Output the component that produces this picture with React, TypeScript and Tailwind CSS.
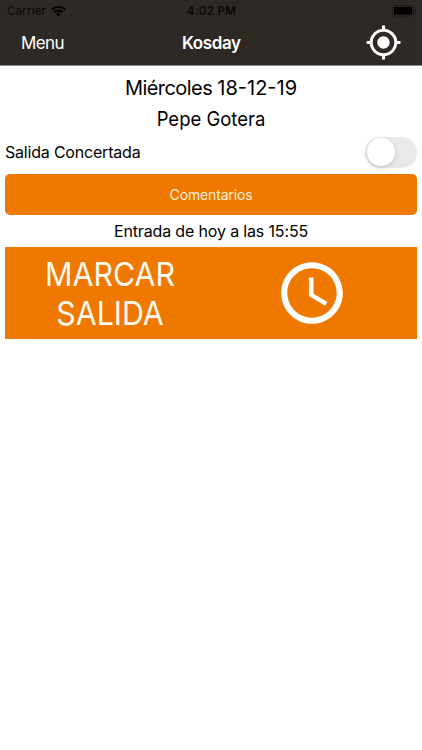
import React, { useState } from 'react';

function WifiIcon() {
  return (
    <svg viewBox="0 0 15 11" className="w-[15px] h-[11px]" fill="black">
      <path d="M7.5 0C4.6 0 2 1.1 0 2.9l1.3 1.4A9.1 9.1 0 0 1 7.5 2c2.4 0 4.5.8 6.2 2.3L15 2.9C13 1.1 10.4 0 7.5 0z" />
      <path d="M7.5 3.6c-1.9 0-3.6.7-4.9 1.9l1.4 1.5a5.2 5.2 0 0 1 7 0l1.4-1.5A7.1 7.1 0 0 0 7.5 3.6z" />
      <path d="M7.5 7.1c-.9 0-1.7.3-2.3.9l2.3 2.5L9.8 8c-.6-.6-1.4-.9-2.3-.9z" />
    </svg>
  );
}

function BatteryIcon() {
  return (
    <svg viewBox="0 0 24 12" className="w-[24px] h-[12px]">
      <rect x="0.5" y="0.5" width="21" height="10.5" rx="2.5" fill="none" stroke="black" strokeOpacity="0.4" />
      <rect x="2" y="2" width="18" height="7.5" rx="1.3" fill="black" />
      <path d="M22.7 4v3.6c.8-.3 1.3-1 1.3-1.8S23.5 4.3 22.7 4z" fill="black" fillOpacity="0.5" />
    </svg>
  );
}

function LocationIcon() {
  return (
    <svg viewBox="0 0 24 24" className="w-[37px] h-[37px]" fill="white">
      <path d="M12 8c-2.21 0-4 1.79-4 4s1.79 4 4 4 4-1.79 4-4-1.79-4-4-4zm8.94 3A8.994 8.994 0 0 0 13 3.06V1h-2v2.06A8.994 8.994 0 0 0 3.06 11H1v2h2.06A8.994 8.994 0 0 0 11 20.94V23h2v-2.06A8.994 8.994 0 0 0 20.94 13H23v-2h-2.06zM12 19c-3.87 0-7-3.13-7-7s3.13-7 7-7 7 3.13 7 7-3.13 7-7 7z" />
    </svg>
  );
}

function ClockIcon() {
  return (
    <svg viewBox="0 0 24 24" className="w-[74px] h-[74px]" fill="white">
      <path d="M11.99 2C6.47 2 2 6.48 2 12s4.47 10 9.99 10C17.52 22 22 17.52 22 12S17.52 2 11.99 2zM12 20c-4.42 0-8-3.58-8-8s3.58-8 8-8 8 3.58 8 8-3.58 8-8 8z" />
      <path d="M12.5 7H11v6l5.25 3.15.75-1.23-4.5-2.67z" />
    </svg>
  );
}

function Header() {
  return (
    <header className="h-[66px] bg-[#2f2925] border-b border-[#8d8987]">
      <div className="h-[22px] pl-[7px] pr-[6px] grid grid-cols-3 items-center text-[11.5px] leading-[22px]">
        <div className="flex items-center gap-[5px]">
          <span className="tracking-[0.2px] text-black/80">Carrier</span>
          <WifiIcon />
        </div>
        <span className="text-center font-semibold tracking-[0.35px] text-black/80">4:02 PM</span>
        <div className="flex justify-end">
          <BatteryIcon />
        </div>
      </div>
      <div className="h-[43px] pl-[21px] pr-[20.5px] grid grid-cols-3 items-center text-white text-[17px]">
        <button className="text-left tracking-[-0.6px]">Menu</button>
        <h1 className="text-center font-semibold tracking-[-0.4px]">Kosday</h1>
        <button className="mb-[2px] flex justify-end">
          <LocationIcon />
        </button>
      </div>
    </header>
  );
}

export default function App() {
  const [agreed, setAgreed] = useState(false);

  return (
    <div className="min-h-screen bg-white text-black font-[Inter,sans-serif]">
      <Header />

      <main className="px-[5px]">
        <p className="pt-[7px] text-center text-[20px] leading-[31px]">
          <span className="tracking-[-0.55px]">Miércoles </span>18-12-19
        </p>
        <p className="text-center text-[20px] leading-[31px] scale-x-[0.925]">Pepe Gotera</p>

        <div className="h-[39px] pb-[5px] flex items-center justify-between">
          <span className="text-[16px] tracking-[-0.2px]">Salida Concertada</span>
          <button
            role="switch"
            aria-checked={agreed}
            onClick={() => setAgreed(!agreed)}
            className={`w-[52px] h-[31px] p-[1.5px] flex rounded-full bg-[#e9e9eb] ${agreed ? 'justify-end' : 'justify-start'}`}
          >
            <span className="size-[28px] rounded-full bg-white shadow-[0_2px_5px_rgba(0,0,0,0.15)]" />
          </button>
        </div>

        <button className="w-full h-[41px] rounded-[5px] bg-[#ee7800] text-[14px] tracking-[-0.15px] text-[#fff0d8]">
          Comentarios
        </button>

        <p className="h-[32px] text-center text-[16px] leading-[32px] tracking-[-0.15px]">Entrada de hoy a las 15:55</p>

        <button className="w-full h-[92px] px-[4px] grid grid-cols-2 items-center bg-[#ee7800] text-[#fffaf0]">
          <span className="pt-px text-[33px] leading-[39px] scale-x-[0.92]">
            MARCAR
            <br />
            SALIDA
          </span>
          <span className="flex justify-center">
            <ClockIcon />
          </span>
        </button>
      </main>
    </div>
  );
}
